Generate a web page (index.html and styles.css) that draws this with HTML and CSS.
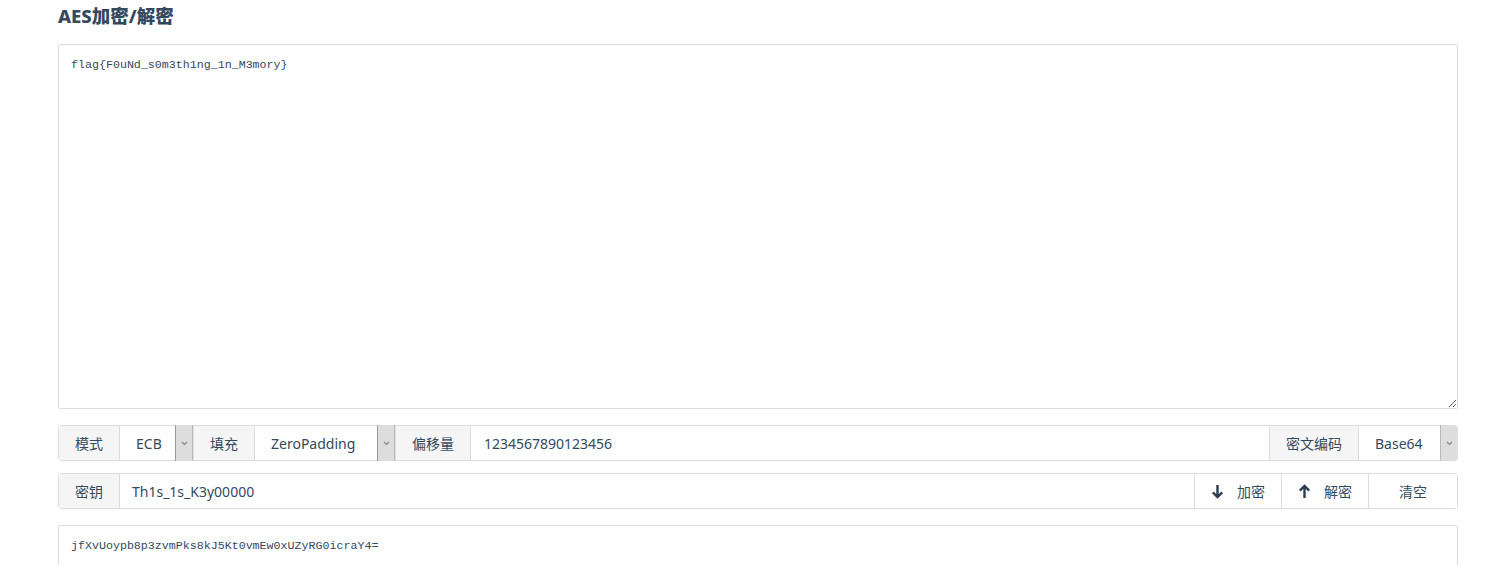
FILE: index.html
```html
<!DOCTYPE html>
<html lang="zh-CN">

<head>
  <meta charset="UTF-8">
  <meta name="viewport" content="width=device-width, initial-scale=1.0">
  <title>AES加密/解密</title>
  <link rel="stylesheet" href="styles.css">
</head>

<body>
  <div class="tool-container">
    <h2 class="tool-title">AES加密/解密</h2>

    <textarea id="plain" class="text-box" spellcheck="false">flag{F0uNd_s0m3th1ng_1n_M3mory}</textarea>

    <div class="input-row">
      <span class="addon">模式</span>
      <div class="select select-mode">
        <span class="select-value">ECB</span>
        <span class="select-arrow"><svg width="7" height="5" viewBox="0 0 7 5"><path d="M1 1l2.5 2.5L6 1" fill="none" stroke="#888" stroke-width="1.2"/></svg></span>
      </div>
      <span class="addon">填充</span>
      <div class="select select-padding">
        <span class="select-value">ZeroPadding</span>
        <span class="select-arrow"><svg width="7" height="5" viewBox="0 0 7 5"><path d="M1 1l2.5 2.5L6 1" fill="none" stroke="#888" stroke-width="1.2"/></svg></span>
      </div>
      <span class="addon">偏移量</span>
      <div class="field">1234567890123456</div>
      <span class="addon">密文编码</span>
      <div class="select select-encoding">
        <span class="select-value">Base64</span>
        <span class="select-arrow"><svg width="7" height="5" viewBox="0 0 7 5"><path d="M1 1l2.5 2.5L6 1" fill="none" stroke="#888" stroke-width="1.2"/></svg></span>
      </div>
    </div>

    <div class="input-row input-row-key">
      <span class="addon">密钥</span>
      <div class="field field-key">Th1s_1s_K3y00000</div>
      <button class="btn"><svg width="13" height="15" viewBox="0 0 13 15"><path d="M6.5 1v12M1.8 8.3l4.7 4.7 4.7-4.7" fill="none" stroke="#2c3e50" stroke-width="2.4"/></svg>加密</button>
      <button class="btn"><svg width="13" height="15" viewBox="0 0 13 15"><path d="M6.5 14V2M1.8 6.7L6.5 2l4.7 4.7" fill="none" stroke="#2c3e50" stroke-width="2.4"/></svg>解密</button>
      <button class="btn btn-clear">清空</button>
    </div>

    <textarea id="cipher" class="text-box" spellcheck="false">jfXvUoypb8p3zvmPks8kJ5Kt0vmEw0xUZyRG0icraY4=</textarea>
  </div>
</body>

</html>
```

FILE: styles.css
```css
body {
  margin: 0;
  background: #fff;
  color: #34495e;
  font-family: "Noto Sans", "Noto Sans CJK SC", sans-serif;
}

.tool-container {
  width: 1400px;
  margin-left: 58px;
}

.tool-title {
  margin: 0;
  padding-top: 3px;
  font-size: 18.5px;
  line-height: 26px;
  font-weight: 800;
  color: #34495e;
}

.text-box {
  display: block;
  box-sizing: border-box;
  width: 100%;
  height: 365px;
  margin: 15px 0 0;
  padding: 12px 12px;
  border: 1px solid #ddd;
  border-radius: 2px;
  font-family: "Liberation Mono", monospace;
  font-size: 11.65px;
  line-height: 16px;
  color: #34495e;
  resize: vertical;
  outline: none;
}

#cipher {
  margin-top: 16px;
  padding-top: 12px;
}

.input-row {
  display: flex;
  height: 36px;
  box-sizing: border-box;
  margin-top: 16px;
  border: 1px solid #ddd;
  border-radius: 3px;
  font-size: 14px;
}

.input-row-key {
  margin-top: 12px;
}

.input-row > * + * {
  border-left: 1px solid #ddd;
}

.addon {
  display: flex;
  align-items: center;
  padding: 0 16px;
  background: #f5f5f5;
  color: #34495e;
  white-space: nowrap;
}

.select {
  display: flex;
  background: #fff;
}

.select-value {
  display: flex;
  align-items: center;
  flex: 1;
  padding-left: 16px;
}

.select-mode { width: 73px; }
.select-padding { width: 140px; }
.select-encoding { width: 98px; }

.select-arrow {
  display: flex;
  align-items: center;
  justify-content: center;
  width: 16px;
  margin: -1px 0;
  background: #ddd;
  border-left: 1px solid #999;
  border-right: 1px solid #bbb;
}

.select-encoding .select-arrow {
  border-right: none;
  border-left-color: #bbb;
  border-radius: 0 3px 3px 0;
}

.field {
  display: flex;
  align-items: center;
  flex: 1;
  padding-left: 13px;
  background: #fff;
}

.field-key {
  padding-left: 12px;
}

.btn {
  display: flex;
  align-items: center;
  justify-content: center;
  gap: 13px;
  width: 87px;
  padding: 0;
  border: none;
  border-left: 1px solid #ddd;
  background: #fff;
  color: #34495e;
  font-family: inherit;
  font-size: 14px;
  cursor: pointer;
}

.btn-clear {
  width: 89px;
}
```
